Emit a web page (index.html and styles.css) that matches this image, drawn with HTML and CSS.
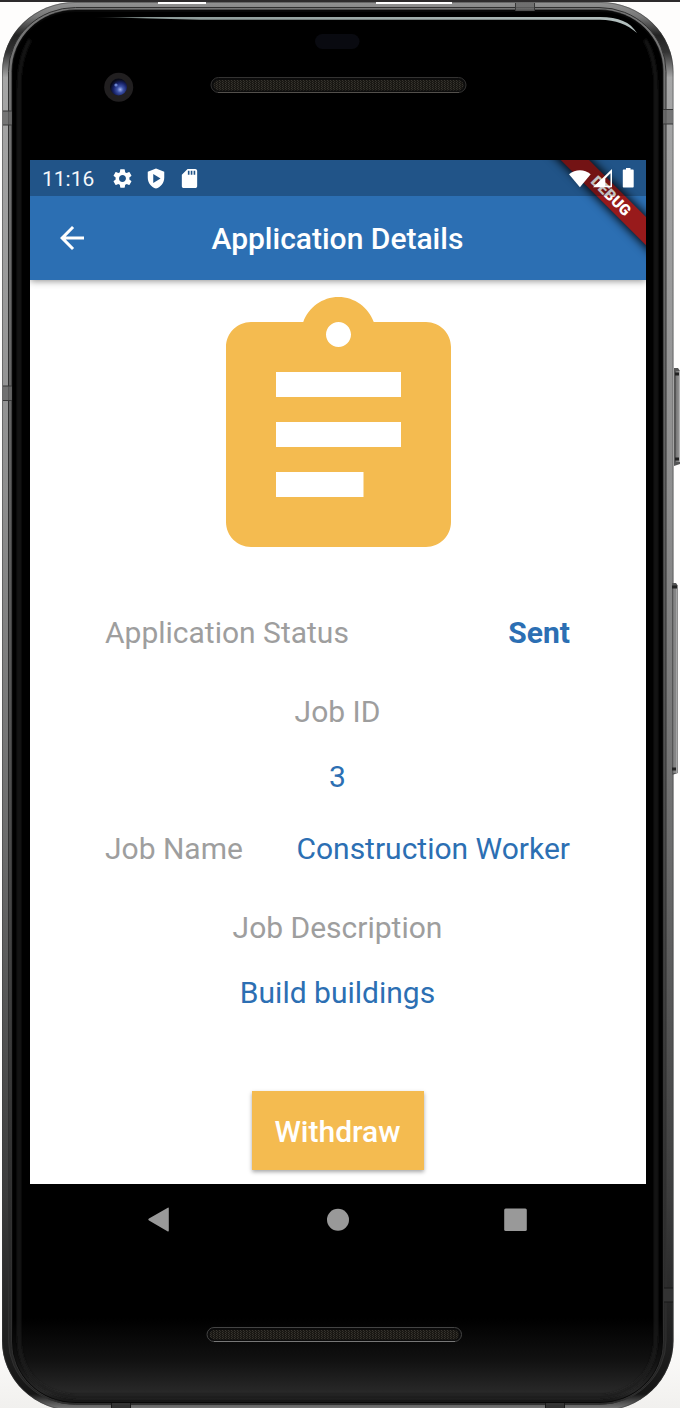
FILE: index.html
```html
<!DOCTYPE html>
<html lang="en">
<head>
<meta charset="utf-8">
<title>Application Details</title>
<link rel="stylesheet" href="styles.css">
</head>
<body>
<div class="device">
  <svg class="frame" viewBox="0 0 680 1408" width="680" height="1408" aria-hidden="true">
    <defs>
      <linearGradient id="metal" x1="0" y1="0" x2="0" y2="1408" gradientUnits="userSpaceOnUse">
        <stop offset="0" stop-color="#969696"/><stop offset=".012" stop-color="#777"/><stop offset=".025" stop-color="#222"/><stop offset=".037" stop-color="#333"/><stop offset=".055" stop-color="#a6a6a6"/>
        <stop offset=".35" stop-color="#8e8e8e"/><stop offset=".6" stop-color="#6c6c6c"/><stop offset=".85" stop-color="#3c3c3c"/><stop offset=".95" stop-color="#202020"/><stop offset=".99" stop-color="#151515"/><stop offset="1" stop-color="#777"/>
      </linearGradient>
      <linearGradient id="groove" x1="0" y1="0" x2="0" y2="1408" gradientUnits="userSpaceOnUse">
        <stop offset="0" stop-color="#777"/><stop offset=".5" stop-color="#555"/><stop offset=".85" stop-color="#303030"/><stop offset="1" stop-color="#222"/>
      </linearGradient>
      <linearGradient id="chin" x1="0" y1="1318" x2="0" y2="1402" gradientUnits="userSpaceOnUse">
        <stop offset="0" stop-color="#000"/><stop offset=".5" stop-color="#111"/><stop offset=".88" stop-color="#282828"/><stop offset="1" stop-color="#161616"/>
      </linearGradient>
      <linearGradient id="page" x1="0" y1="1330" x2="0" y2="1408" gradientUnits="userSpaceOnUse">
        <stop offset="0" stop-color="#fefdfc"/><stop offset="1" stop-color="#f1f0ee"/>
      </linearGradient>
      <linearGradient id="shine" x1="92" y1="0" x2="640" y2="0" gradientUnits="userSpaceOnUse">
        <stop offset="0" stop-color="#8b9997" stop-opacity="0"/><stop offset=".1" stop-color="#8b9997"/><stop offset="1" stop-color="#b4c0bf"/>
      </linearGradient>
      <linearGradient id="key" x1="0" y1="0" x2="1" y2="0">
        <stop offset="0" stop-color="#444"/><stop offset=".35" stop-color="#858585"/><stop offset=".65" stop-color="#858585"/><stop offset="1" stop-color="#c5c5c5"/>
      </linearGradient>
      <radialGradient id="lens" cx=".6" cy=".65" r=".6">
        <stop offset="0" stop-color="#a3b2ef"/><stop offset=".3" stop-color="#3e54a8"/><stop offset=".65" stop-color="#18236a"/><stop offset="1" stop-color="#080a16"/>
      </radialGradient>
      <pattern id="mesh" width="3" height="2" patternUnits="userSpaceOnUse">
        <rect width="3" height="2" fill="#191713"/><rect width="1" height="1" fill="#38352f"/><rect x="1" y="1" width="1" height="1" fill="#302e29"/>
      </pattern>
      <filter id="soft" x="-10%" y="-10%" width="120%" height="120%"><feGaussianBlur stdDeviation="1.800"/></filter>
    </defs>
    <rect width="680" height="1408" fill="url(#page)"/>
    <rect x="2" y="2" width="671.500" height="1409" rx="73" ry="70" fill="url(#metal)"/>
    <rect x="2.500" y="2.500" width="670.500" height="1408" rx="72.500" ry="69.500" fill="none" stroke="#3c3c3c" stroke-opacity=".5"/>
    <path d="M158 2h48v2h-48zM376 2h76v2h-76z" fill="#fff"/>
    <rect x="8.500" y="7.500" width="657.500" height="1397" rx="67" ry="64" fill="url(#groove)" stroke="#303030"/>
    <rect x="11.500" y="9.500" width="652" height="1394" rx="64" ry="62" fill="#080808" stroke="#777" stroke-opacity=".25"/>
    <rect x="13" y="12" width="649" height="1390" rx="62" ry="59" fill="url(#chin)"/>
    <path d="M30 40Q19 58 19 90V1335C19 1374 40 1394 76 1397H600C637 1394 656 1370 656 1335V90Q656 58 645 40" fill="none" stroke="#1e1e1e" stroke-width="3" filter="url(#soft)"/>
    <path d="M92 17H600C619 17 630 22 637 33C627 24 616 20 600 19.700H200Z" fill="url(#shine)"/>
    <path d="M3 111h9v14H3zM3 386h9v15H3zM515 3h20v8h-20zM663 109h10v15h-10z" fill="#666" fill-opacity=".75"/>
    <path d="M3 111h9M3 125h9M3 386h9M3 400.500h9M515.500 3v8M534.500 3v8M663 109.500h10M663 124h10" stroke="#383838" fill="none"/>
    <path d="M664 1288h9v14h-9zM111 1403h20v5h-20zM545 1403h20v5h-20z" fill="#333"/>
    <path d="M664 1288h9M664 1302h9M111.500 1403v5M130.500 1403v5M545.500 1403v5M564.500 1403v5" stroke="#181818"/>
    <path d="M674 368h4l2 3v93l-6 2z" fill="#555"/><rect x="675" y="371" width="5" height="91" fill="url(#key)"/>
    <path d="M675 374h4M675 459h4" stroke="#222" stroke-width="3"/>
    <path d="M672 583h4l2 3v187l-6 2z" fill="#555"/><rect x="672" y="586" width="5.500" height="187" fill="url(#key)"/>
    <path d="M672 587h5M672 769h4" stroke="#222" stroke-width="3"/>
    <rect width="680" height="2" fill="#2d2b2c"/>
    <rect x="315" y="34" width="44.500" height="15" rx="7.500" fill="#090a10"/>
    <circle cx="118.700" cy="87.300" r="14.500" fill="#211f20"/><circle cx="118.500" cy="87" r="8.500" fill="url(#lens)"/><circle cx="116" cy="85" r="1.600" fill="#6b84d0"/>
    <rect x="211" y="77.500" width="255" height="15" rx="7.500" fill="#0c0c0c" stroke="#343332"/><rect x="213.500" y="80" width="250" height="10.500" rx="5.250" fill="url(#mesh)"/><path d="M218 92.500H459" stroke="#53504c"/>
    <rect x="207" y="1327.500" width="254.500" height="14" rx="7" fill="#0c0c0c" stroke="#444"/><rect x="209.500" y="1330" width="249.500" height="9.500" rx="4.750" fill="url(#mesh)"/><path d="M214 1341.500H455" stroke="#777"/>
  </svg>

  <main class="screen">
    <div class="appbar">
      <svg class="back" viewBox="0 0 24 24"><path d="M20 11H7.830l5.590-5.590L12 4l-8 8 8 8 1.410-1.410L7.830 13H20z"/></svg>
      <h1 class="title">Application Details</h1>
    </div>
    <section class="details">
      <svg class="clipboard" viewBox="3 1 18 20"><path d="M19 3h-4.180C14.400 1.840 13.300 1 12 1c-1.300 0-2.400.84-2.820 2H5c-1.100 0-2 .9-2 2v14c0 1.100.9 2 2 2h14c1.100 0 2-.9 2-2V5c0-1.100-.9-2-2-2zm-7 0c.55 0 1 .45 1 1s-.45 1-1 1-1-.45-1-1 .45-1 1-1zm2 14H7v-2h7v2zm3-4H7v-2h10v2zm0-4H7V7h10v2z"/></svg>
      <div class="row status-row"><span class="label">Application Status</span><span class="value strong">Sent</span></div>
      <div class="label id-label">Job ID</div>
      <div class="value id-value">3</div>
      <div class="row name-row"><span class="label">Job Name</span><span class="value">Construction Worker</span></div>
      <div class="label desc-label">Job Description</div>
      <div class="value desc-value">Build buildings</div>
      <button class="withdraw">Withdraw</button>
    </section>
    <div class="ribbon-box"><div class="ribbon">DEBUG</div></div>
    <header class="status">
      <span class="clock">11:16</span>
      <svg class="s-icon" viewBox="0 0 24 24"><path d="M19.140 12.940c.040-.3.060-.610.060-.940 0-.320-.020-.640-.070-.940l2.030-1.580a.49.49 0 0 0 .12-.61l-1.920-3.320a.488.488 0 0 0-.59-.22l-2.390.96c-.5-.380-1.030-.7-1.620-.940l-.36-2.540a.484.484 0 0 0-.48-.41h-3.840c-.24 0-.43.17-.47.41l-.36 2.540c-.59.24-1.130.57-1.620.94l-2.390-.96c-.22-.08-.47 0-.59.22L2.740 8.870c-.12.21-.08.47.12.61l2.030 1.580c-.05.3-.09.63-.09.94s.02.64.07.94l-2.030 1.580a.49.49 0 0 0-.12.61l1.920 3.320c.12.22.37.29.59.22l2.390-.96c.5.38 1.030.7 1.620.94l.36 2.540c.05.24.24.41.48.41h3.840c.24 0 .44-.17.47-.41l.36-2.540c.59-.24 1.130-.56 1.620-.94l2.390.96c.22.08.47 0 .59-.22l1.920-3.320c.12-.22.07-.47-.12-.61l-2.010-1.580zM12 15.600A3.610 3.610 0 0 1 8.400 12c0-1.980 1.620-3.600 3.600-3.600s3.600 1.620 3.600 3.600-1.620 3.600-3.600 3.600z"/></svg>
      <svg class="s-icon shield" viewBox="0 0 24 24"><path fill-rule="evenodd" d="M12 1 3 4.500V11c0 5.600 3.700 10.700 9 12 5.300-1.300 9-6.400 9-12V4.500zM9 7.200 17 12l-8 4.800z"/></svg>
      <svg class="s-icon card" viewBox="0 0 24 24"><path fill-rule="evenodd" d="M18 2h-8L4 8v12c0 1.100.9 2 2 2h12c1.100 0 2-.9 2-2V4c0-1.100-.9-2-2-2zm-6 6h-1.700V4H12zm3 0h-1.700V4H15zm3 0h-1.700V4H18z"/></svg>
      <svg class="signals" viewBox="0 0 70 24">
        <path d="M1 6.200C7.500.8 16.300.8 22.700 6.200L11.900 19.300z"/>
        <path fill-rule="evenodd" d="M44 1V19.300H25zM42.500 5.300 37.300 10.500V17.700H42.500z"/>
        <path d="M55.800 1.600h2.200V0h4.500v1.600h2.200c.6 0 1 .4 1 1v15.800c0 .6-.4 1-1 1h-8.900c-.6 0-1-.4-1-1V2.600c0-.6.4-1 1-1z"/>
      </svg>
    </header>
  </main>
  <nav class="nav">
    <svg viewBox="0 0 24 26"><path d="M20.800 1.500V23.500Q20.800 25 19.400 24.200L1 13.600Q-.4 12.500 1 11.500L19.400.9Q20.800 0 20.800 1.500Z"/></svg>
    <svg viewBox="0 0 24 26"><circle cx="12" cy="12.700" r="11"/></svg>
    <svg viewBox="0 0 24 26"><rect x=".2" y="1.500" width="22.600" height="22.600" rx="1.500"/></svg>
  </nav>
</div>
</body>
</html>
```
FILE: styles.css
```css
* { box-sizing: border-box; }
body { margin: 0; font-family: Roboto, sans-serif; }
.device { position: relative; width: 680px; height: 1408px; padding: 160px 34px 0 30px; overflow: hidden; }
.frame { position: absolute; left: 0; top: 0; }
.screen { position: relative; width: 616px; height: 1024px; background: #fff; overflow: hidden; }
/* The status bar is a translucent shade over the app bar and ribbon. */
.status { position: absolute; left: 0; top: 0; width: 100%; height: 36px; background: rgba(0,0,0,.24); display: flex; align-items: center; padding-left: 12px; }
.clock { color: #f4f7fa; font-size: 21px; width: 68.5px; line-height: 36px; padding-top: 2px; }
.s-icon { width: 23px; height: 23px; fill: #fff; }
.shield { width: 22px; margin-left: 11px; }
.card { margin-left: 11px; }
.appbar { position: relative; height: 120px; background: #2c6fb3; display: flex; align-items: center; padding: 36px 0 0 24px; box-shadow: 0 1px 7px rgba(0,0,0,.45); }
.back { width: 36px; height: 36px; fill: #fff; }
.title { margin: 2px 0 0 121.5px; color: #fff; font-size: 30px; font-weight: 500; white-space: nowrap; line-height: 36px; }
.details { display: flex; flex-direction: column; align-items: center; padding: 17px 76px 0 75px; font-size: 30px; line-height: 36px; white-space: nowrap; }
.clipboard { width: 225px; height: 250px; margin-left: 1px; fill: #f4bb50; }
.row { width: 100%; display: flex; justify-content: space-between; }
.label { color: #9e9e9e; }
.value { color: #2c6fb3; }
.strong { font-weight: 700; }
.status-row { margin-top: 68px; }
.id-label { margin-top: 43px; }
.id-value { margin-top: 29px; }
.name-row { margin-top: 36px; }
.desc-label { margin-top: 43px; }
.desc-value { margin-top: 29px; }
.withdraw { margin-top: 80px; width: 172px; height: 79px; padding: 2px 0 0; border: 0; background: #f4bb50; color: #fff; font: 500 30px/36px Roboto, sans-serif; box-shadow: 0 2px 4px rgba(0,0,0,.35); }
.ribbon-box { position: absolute; right: 0; top: 0; width: 120px; height: 120px; overflow: hidden; }
.ribbon { position: absolute; left: -5.5px; top: 25.5px; width: 180px; height: 19.5px; background: #981a1b; color: #fff; font-size: 15.3px; font-weight: 900; line-height: 20px; text-align: center; transform: rotate(45deg); box-shadow: 0 0 9px 2px rgba(0,0,0,.85); }
.signals { position: absolute; left: 538px; top: 8px; width: 70px; height: 24px; fill: #fff; }
.nav { position: relative; display: flex; justify-content: space-between; padding: 23px 118px 0 118px; }
.nav svg { width: 24px; height: 26px; fill: #999; }
```
